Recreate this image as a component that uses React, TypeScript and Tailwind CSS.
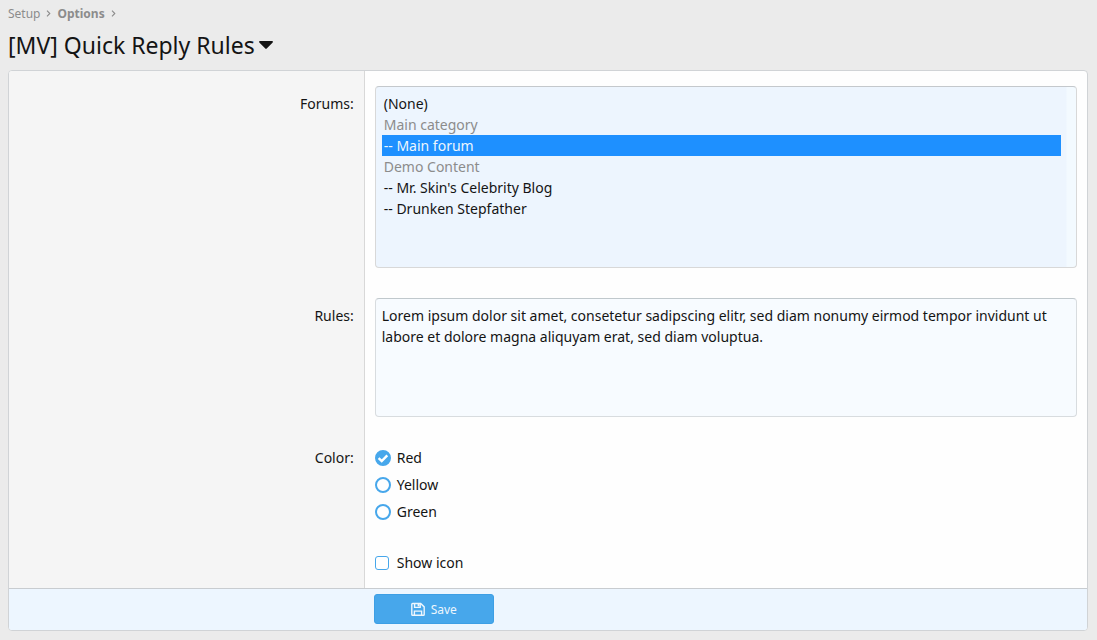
import { useState, type ReactNode } from 'react';

const forums = [
  { value: 'none', label: '(None)' },
  { value: 'main-category', label: 'Main category', disabled: true },
  { value: 'main-forum', label: '-- Main forum' },
  { value: 'demo', label: 'Demo Content', disabled: true },
  { value: 'mr-skin', label: "-- Mr. Skin's Celebrity Blog" },
  { value: 'stepfather', label: '-- Drunken Stepfather' },
];

const colors = ['Red', 'Yellow', 'Green'];

function Row({ label, className, children }: { label: ReactNode; className: string; children: ReactNode }) {
  return (
    <div className="flex">
      <div className={`w-[33%] shrink-0 border-r border-[#d8d8d8] bg-[#f5f5f5] pr-[10px] text-right ${className}`}>
        <div className="pt-[7px]">{label}</div>
      </div>
      <div className={`min-w-0 grow px-[10px] ${className}`}>{children}</div>
    </div>
  );
}

function Chevron() {
  return (
    <svg className="h-[7px] w-[5px]" viewBox="0 0 5 7" fill="none" stroke="#8c8c8c" strokeWidth="1.1" aria-hidden="true">
      <path d="M1 .6 3.8 3.5 1 6.4" />
    </svg>
  );
}

function ColorOption({ name, checked, onPick }: { name: string; checked: boolean; onPick: () => void }) {
  return (
    <label className="flex h-[21px] items-center gap-[6px]">
      <span className="grid h-4 w-4">
        <input
          type="radio"
          name="color"
          checked={checked}
          onChange={onPick}
          className="col-start-1 row-start-1 h-4 w-4 appearance-none rounded-full border-2 border-[#47a7eb] bg-white checked:bg-[#47a7eb]"
        />
        {checked && (
          <svg
            className="pointer-events-none col-start-1 row-start-1 h-4 w-4"
            viewBox="0 0 16 16"
            fill="none"
            stroke="#fff"
            strokeWidth="2.4"
            aria-hidden="true"
          >
            <path d="M3.6 8.2 6.7 11 12.3 5.4" />
          </svg>
        )}
      </span>
      {name}
    </label>
  );
}

export default function App() {
  const [selected, setSelected] = useState<string[]>(['main-forum']);
  const [color, setColor] = useState('Red');
  const [rules, setRules] = useState(
    'Lorem ipsum dolor sit amet, consetetur sadipscing elitr, sed diam nonumy eirmod tempor invidunt ut labore et dolore magna aliquyam erat, sed diam voluptua.',
  );

  return (
    <div className="min-h-screen bg-[#ebebeb] pr-[9px] pb-[9px] pl-2 font-['Noto_Sans',sans-serif] text-[14px] leading-[21px] text-[#141414]">
      <nav aria-label="Breadcrumb" className="flex h-[27px] items-center gap-[6px] text-[12px] text-[#8c8c8c]">
        <a href="#setup">Setup</a>
        <Chevron />
        <a href="#options" className="font-bold">
          Options
        </a>
        <Chevron />
      </nav>

      <h1 className="flex h-[43px] items-start text-[23px] leading-[36px]">
        <button type="button" className="flex items-center gap-1">
          [MV] Quick Reply Rules
          <svg className="h-2 w-[14px]" viewBox="0 0 14 8" fill="currentColor" aria-hidden="true">
            <path d="M.9 0h12.2c.8 0 1.1.9.6 1.4L7.7 7.6a1 1 0 0 1-1.4 0L.3 1.4C-.2.9.1 0 .9 0Z" />
          </svg>
        </button>
      </h1>

      <form
        className="overflow-hidden rounded-[4px] border border-[#d0d3d6] bg-[#fefefe]"
        onSubmit={(e) => e.preventDefault()}
      >
        <Row className="pt-[15px] pb-[15px]" label={<label htmlFor="forums">Forums:</label>}>
          <select
            id="forums"
            multiple
            size={8}
            value={selected}
            onChange={(e) => setSelected(Array.from(e.target.selectedOptions, (o) => o.value))}
            className="block h-[182px] w-full overflow-y-auto rounded-[4px] border border-[#d8d8d8] border-t-[#c4c8cc] bg-[#edf6fd] bg-[linear-gradient(to_left,#f3faff_9px,#edf5fe_10px)] py-[6px] pr-[15px] pl-[6px] outline-none"
          >
            {forums.map((f) => (
              <option
                key={f.value}
                value={f.value}
                disabled={f.disabled}
                className="h-[21px] min-h-0 px-[2px] pt-px pb-0 leading-[20px] checked:bg-[linear-gradient(#1e90ff,#1e90ff)] checked:[-webkit-text-fill-color:#edf6fd] disabled:text-[#8c8c8c]"
              >
                {f.label}
              </option>
            ))}
          </select>
        </Row>

        <Row className="pt-[15px] pb-[15px]" label={<label htmlFor="rules">Rules:</label>}>
          <textarea
            id="rules"
            value={rules}
            onChange={(e) => setRules(e.target.value)}
            spellCheck={false}
            className="block h-[119px] w-full resize-none rounded-[4px] border border-[#d8dcdf] border-t-[#c0c8cc] bg-[#f7fbff] p-[6px] outline-none"
          />
        </Row>

        <Row className="pt-[8px] pb-[15px]" label={<span id="color-label">Color:</span>}>
          <div role="radiogroup" aria-labelledby="color-label" className="flex flex-col gap-[6px] pt-[7px]">
            {colors.map((c) => (
              <ColorOption key={c} name={c} checked={c === color} onPick={() => setColor(c)} />
            ))}
          </div>
        </Row>

        <Row className="pt-[8px] pb-[15px]" label={null}>
          <label className="flex items-center gap-2 pt-[7px]">
            <input
              type="checkbox"
              className="h-[14px] w-[14px] appearance-none rounded-[3px] border border-[#47a7eb] bg-white checked:bg-[#47a7eb]"
            />
            Show icon
          </label>
        </Row>

        <div className="flex border-t border-[#c8ccd0] bg-[#edf6ff] pt-[5px] pb-[6px]">
          <div className="w-[33%] shrink-0" />
          <div className="grow px-[9px]">
            <button
              type="submit"
              className="flex h-[30px] w-[120px] items-center justify-center gap-[6px] rounded-[3px] border border-[#3d9fe5] bg-[#47a7eb] text-[12px] text-[#edf6fd]"
            >
              <svg className="h-[14px] w-[14px]" viewBox="0 0 14 14" fill="none" stroke="currentColor" strokeWidth="1.4" aria-hidden="true">
                <path d="M1.6 1.5h8.1l3.5 3.4v7.6c0 .5-.3.8-.8.8H1.6c-.5 0-.8-.3-.8-.8V2.3c0-.5.3-.8.8-.8Z" />
                <path d="M3.6 1.5v3.9h5.6V1.5M3.4 13.2V9.1h7.2v4.1" />
                <path d="M7.5 1.6v2.8" strokeWidth="1.8" />
              </svg>
              Save
            </button>
          </div>
        </div>
      </form>
    </div>
  );
}
